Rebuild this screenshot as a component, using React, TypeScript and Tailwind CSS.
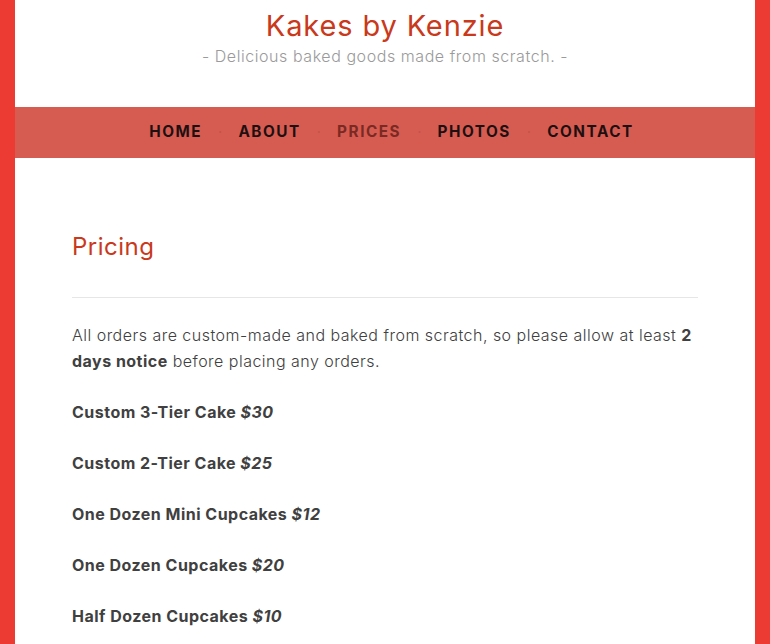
const NAV = ["Home", "About", "Prices", "Photos", "Contact"];

const PRICES = [
  { name: "Custom 3-Tier Cake", price: "$30" },
  { name: "Custom 2-Tier Cake", price: "$25" },
  { name: "One Dozen Mini Cupcakes", price: "$12" },
  { name: "One Dozen Cupcakes", price: "$20" },
  { name: "Half Dozen Cupcakes", price: "$10" },
];

export default function App() {
  return (
    <div className="min-h-screen bg-[#ec3b32] px-[15px] font-['Inter',sans-serif]">
      <div className="min-h-[644px] bg-white">
        <header className="flex h-[107px] flex-col items-center pt-[7px]">
          <h1 className="text-[29px] leading-[38px] tracking-[0.03em] text-[#c9391b]">Kakes by Kenzie</h1>
          <p className="mt-[0px] text-[16px] font-light leading-[22px] tracking-[0.035em] text-[#9a9a9a]">
            - Delicious baked goods made from scratch. -
          </p>
        </header>

        <nav className="flex h-[51px] items-center justify-center bg-[#d65c52] pl-[13px]">
          {NAV.map((item, i) => (
            <div key={item} className="flex items-center">
              {i > 0 && <span className="px-[16px] text-[15px] text-[#c4534a]">·</span>}
              <span
                className={`text-[15.3px] font-bold uppercase tracking-[0.1em] ${
                  item === "Prices" ? "text-[#7a2a22]" : "text-[#1e1010]"
                }`}
              >
                {item}
              </span>
            </div>
          ))}
        </nav>

        <main className="px-[57px] pt-[73px] text-[#404040]">
          <h2 className="text-[24px] leading-[32px] tracking-[0.02em] text-[#c9391b]">Pricing</h2>
          <hr className="mt-[34px] border-[#e6e6e6]" />
          <p className="mt-[24px] text-[16px] font-light leading-[26px] tracking-[0.03em]">
            All orders are custom-made and baked from scratch, so please allow at least{" "}
            <strong className="font-bold">2 days notice</strong> before placing any orders.
          </p>
          {PRICES.map((p) => (
            <p key={p.name} className="mt-[25px] text-[16px] font-bold leading-[26px] tracking-[0.03em]">
              {p.name} <em>{p.price}</em>
            </p>
          ))}
        </main>
      </div>
    </div>
  );
}
